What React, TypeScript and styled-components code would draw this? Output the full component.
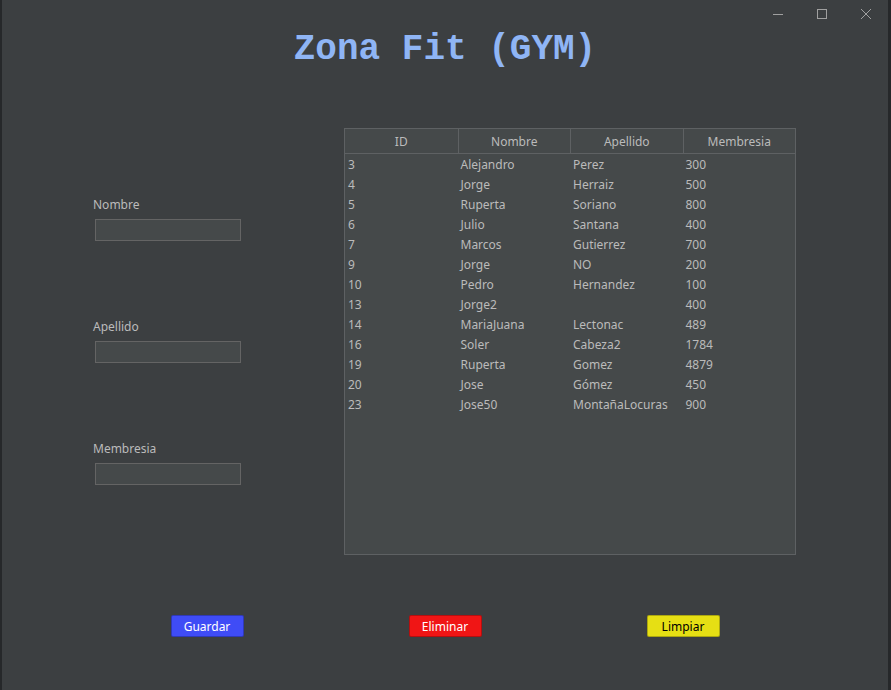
import styled, { createGlobalStyle } from 'styled-components';

const GlobalStyle = createGlobalStyle`
  html, body {
    margin: 0;
    padding: 0;
    background: #26282a;
  }
  body {
    font-family: "Noto Sans", "Open Sans", sans-serif;
  }
`;

const Styled = {
  Window: styled.div`
    display: flex;
    flex-direction: column;
    height: 690px;
    margin: 0 3px 0 2px;
    background-color: #3c3f41;
    color: #bbbbbb;
    font-size: 12px;
  `,
  TitleBar: styled.div`
    display: flex;
    justify-content: flex-end;
    height: 28px;
  `,
  Control: styled.div`
    display: flex;
    width: 44px;
    height: 28px;
    align-items: center;
    justify-content: center;
  `,
  Title: styled.h1`
    margin: 2px 0 0;
    text-align: center;
    font-family: "Liberation Mono", "Courier New", monospace;
    font-size: 36px;
    line-height: 40px;
    font-weight: bold;
    color: #8fb5f5;
  `,
  Content: styled.div`
    display: grid;
    grid-template-columns: 251px 452px;
    margin-top: 58px;
    padding-left: 91px;
  `,
  Form: styled.div`
    display: flex;
    flex-direction: column;
    gap: 78px;
    padding-top: 69px;
  `,
  Field: styled.div`
    display: flex;
    flex-direction: column;
    gap: 6px;
  `,
  Label: styled.label`
    line-height: 16px;
    color: #bbbbbb;
  `,
  Input: styled.div`
    width: 144px;
    height: 20px;
    margin-left: 2px;
    background-color: #45494a;
    border: 1px solid #646464;
  `,
  Table: styled.div`
    height: 425px;
    background-color: #45494a;
    border: 1px solid #5e6163;
  `,
  Row: styled.div<{ $header?: boolean }>`
    display: grid;
    grid-template-columns: repeat(4, 1fr);
    height: ${(p) => (p.$header ? '24px' : '20px')};
    border-bottom: ${(p) => (p.$header ? '1px solid #5e6163' : 'none')};
  `,
  HeaderCell: styled.div`
    display: flex;
    align-items: center;
    justify-content: center;
    border-left: 1px solid #5e6163;

    &:first-child {
      border-left: none;
    }
  `,
  Cell: styled.div`
    display: flex;
    align-items: center;
    padding-left: 3px;
    white-space: nowrap;
    overflow: hidden;
  `,
  Buttons: styled.div`
    display: grid;
    grid-template-columns: repeat(3, 238px);
    margin-top: 60px;
    padding-left: 86px;
  `,
  Button: styled.button<{ $bg: string; $fg: string }>`
    justify-self: center;
    width: 73px;
    height: 22px;
    padding: 0;
    font-family: "Noto Sans", "Open Sans", sans-serif;
    font-size: 12px;
    color: ${(p) => p.$fg};
    background-color: ${(p) => p.$bg};
    border: 1px solid rgba(0, 0, 0, 0.25);
    border-radius: 2px;
  `,
};

const rows: [string, string, string, string][] = [
  ['3', 'Alejandro', 'Perez', '300'],
  ['4', 'Jorge', 'Herraiz', '500'],
  ['5', 'Ruperta', 'Soriano', '800'],
  ['6', 'Julio', 'Santana', '400'],
  ['7', 'Marcos', 'Gutierrez', '700'],
  ['9', 'Jorge', 'NO', '200'],
  ['10', 'Pedro', 'Hernandez', '100'],
  ['13', 'Jorge2', '', '400'],
  ['14', 'MariaJuana', 'Lectonac', '489'],
  ['16', 'Soler', 'Cabeza2', '1784'],
  ['19', 'Ruperta', 'Gomez', '4879'],
  ['20', 'Jose', 'Gómez', '450'],
  ['23', 'Jose50', 'MontañaLocuras', '900'],
];

const fields = ['Nombre', 'Apellido', 'Membresia'];

export default function App() {
  return (
    <>
      <GlobalStyle />
      <Styled.Window>
        <Styled.TitleBar>
          <Styled.Control>
            <svg width="12" height="12" viewBox="0 0 12 12">
              <path d="M1 6.5h10" stroke="#a0a0a0" strokeWidth="1" />
            </svg>
          </Styled.Control>
          <Styled.Control>
            <svg width="12" height="12" viewBox="0 0 12 12">
              <rect x="1.5" y="1.5" width="9" height="9" fill="none" stroke="#a0a0a0" />
            </svg>
          </Styled.Control>
          <Styled.Control>
            <svg width="12" height="12" viewBox="0 0 12 12">
              <path d="M1 1l10 10M11 1L1 11" stroke="#a0a0a0" strokeWidth="1" />
            </svg>
          </Styled.Control>
        </Styled.TitleBar>

        <Styled.Title>Zona Fit (GYM)</Styled.Title>

        <Styled.Content>
          <Styled.Form>
            {fields.map((f) => (
              <Styled.Field key={f}>
                <Styled.Label>{f}</Styled.Label>
                <Styled.Input />
              </Styled.Field>
            ))}
          </Styled.Form>

          <Styled.Table>
            <Styled.Row $header>
              {['ID', 'Nombre', 'Apellido', 'Membresia'].map((h) => (
                <Styled.HeaderCell key={h}>{h}</Styled.HeaderCell>
              ))}
            </Styled.Row>
            {rows.map((r) => (
              <Styled.Row key={r[0]}>
                {r.map((c, i) => (
                  <Styled.Cell key={i}>{c}</Styled.Cell>
                ))}
              </Styled.Row>
            ))}
          </Styled.Table>
        </Styled.Content>

        <Styled.Buttons>
          <Styled.Button $bg="#3f4cf6" $fg="#ffffff">Guardar</Styled.Button>
          <Styled.Button $bg="#f01515" $fg="#ffffff">Eliminar</Styled.Button>
          <Styled.Button $bg="#e6df14" $fg="#000000">Limpiar</Styled.Button>
        </Styled.Buttons>
      </Styled.Window>
    </>
  );
}
